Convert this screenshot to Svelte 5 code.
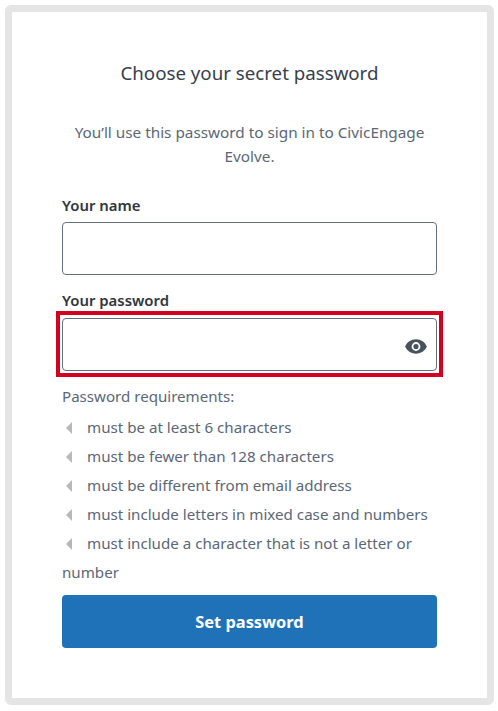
<script>
    const requirements = [
        "must be at least 6 characters",
        "must be fewer than 128 characters",
        "must be different from email address",
        "must include letters in mixed case and numbers",
        "must include a character that is not a letter or number",
    ];
</script>

<div class="page">
    <form class="card" onsubmit={(e) => e.preventDefault()}>
        <h1>Choose your secret password</h1>
        <p class="intro">You’ll use this password to sign in to CivicEngage Evolve.</p>

        <label for="name">Your name</label>
        <input id="name" type="text" />

        <label class="second" for="password">Your password</label>
        <div class="focus-ring">
            <div class="password">
                <input id="password" type="password" />
                <svg class="eye" viewBox="0 0 24 16" aria-hidden="true">
                    <path
                        fill-rule="evenodd"
                        d="M12 0.2C6.600 0.200 2.100 3.400 0.200 8c1.900 4.600 6.400 7.800 11.800 7.800s9.900-3.200 11.800-7.800C21.900 3.400 17.400 0.200 12 0.200zM12 12.800a4.800 4.800 0 1 1 0-9.600 4.800 4.800 0 0 1 0 9.600zM12 5.200a2.800 2.800 0 1 0 0 5.600 2.800 2.800 0 0 0 0-5.600z"
                    ></path>
                </svg>
            </div>
        </div>

        <p class="req-title">Password requirements:</p>
        <ul>
            {#each requirements as item}
                <li><span class="arrow"></span>{item}</li>
            {/each}
        </ul>

        <button type="submit">Set password</button>
    </form>
</div>

<style>
    :global(body) {
        margin: 0;
        background: #fff;
    }

    .page {
        width: 498px;
        height: 711px;
        box-sizing: border-box;
        padding: 5px 4px 6px 5px;
        font-family: "Noto Sans", "Open Sans", sans-serif;
    }

    .card {
        height: 100%;
        box-sizing: border-box;
        border: 7px solid #e5e5e5;
        border-radius: 6px;
        padding: 47px 50px 0;
        display: flex;
        flex-direction: column;
    }

    h1 {
        margin: 0;
        font-size: 18.7px;
        font-weight: 400;
        line-height: 28px;
        color: #36404c;
        text-align: center;
    }

    .intro {
        margin: 33px 0 0;
        font-size: 15.3px;
        line-height: 24px;
        color: #5b6776;
        text-align: center;
    }

    label {
        margin-top: 26px;
        font-size: 14.9px;
        font-weight: 600;
        line-height: 22px;
        color: #2e3640;
    }

    label.second {
        margin-top: 14px;
    }

    input {
        display: block;
        width: 100%;
        height: 53px;
        box-sizing: border-box;
        margin-top: 6px;
        border: 1px solid #65707d;
        border-radius: 4px;
        background: #fff;
        outline: none;
    }

    .focus-ring {
        margin: 0 -6px;
        border: 4px solid #d0021f;
        padding: 3px 2px 2px;
    }

    .password {
        position: relative;
    }

    .password input {
        margin-top: 0;
    }

    .eye {
        position: absolute;
        right: 10px;
        top: 21px;
        width: 22px;
        height: 15px;
        fill: #47525c;
    }

    .req-title {
        margin: 7px 0 0;
        font-size: 15.1px;
        line-height: 24px;
        color: #5b6776;
    }

    ul {
        list-style: none;
        margin: 4.500px 0 0;
        padding: 0;
    }

    li {
        font-size: 15.15px;
        line-height: 29px;
        color: #5b6776;
    }

    .arrow {
        display: inline-block;
        width: 0;
        height: 0;
        margin: 0 15px 0 4px;
        border-top: 6px solid transparent;
        border-bottom: 6px solid transparent;
        border-right: 6px solid #b8b8b8;
        vertical-align: -1px;
    }

    button {
        height: 53px;
        margin-top: 8.500px;
        border: 0;
        border-radius: 4px;
        background: #1f72b8;
        color: #fff;
        font-family: inherit;
        font-size: 16.4px;
        font-weight: 700;
    }
</style>
